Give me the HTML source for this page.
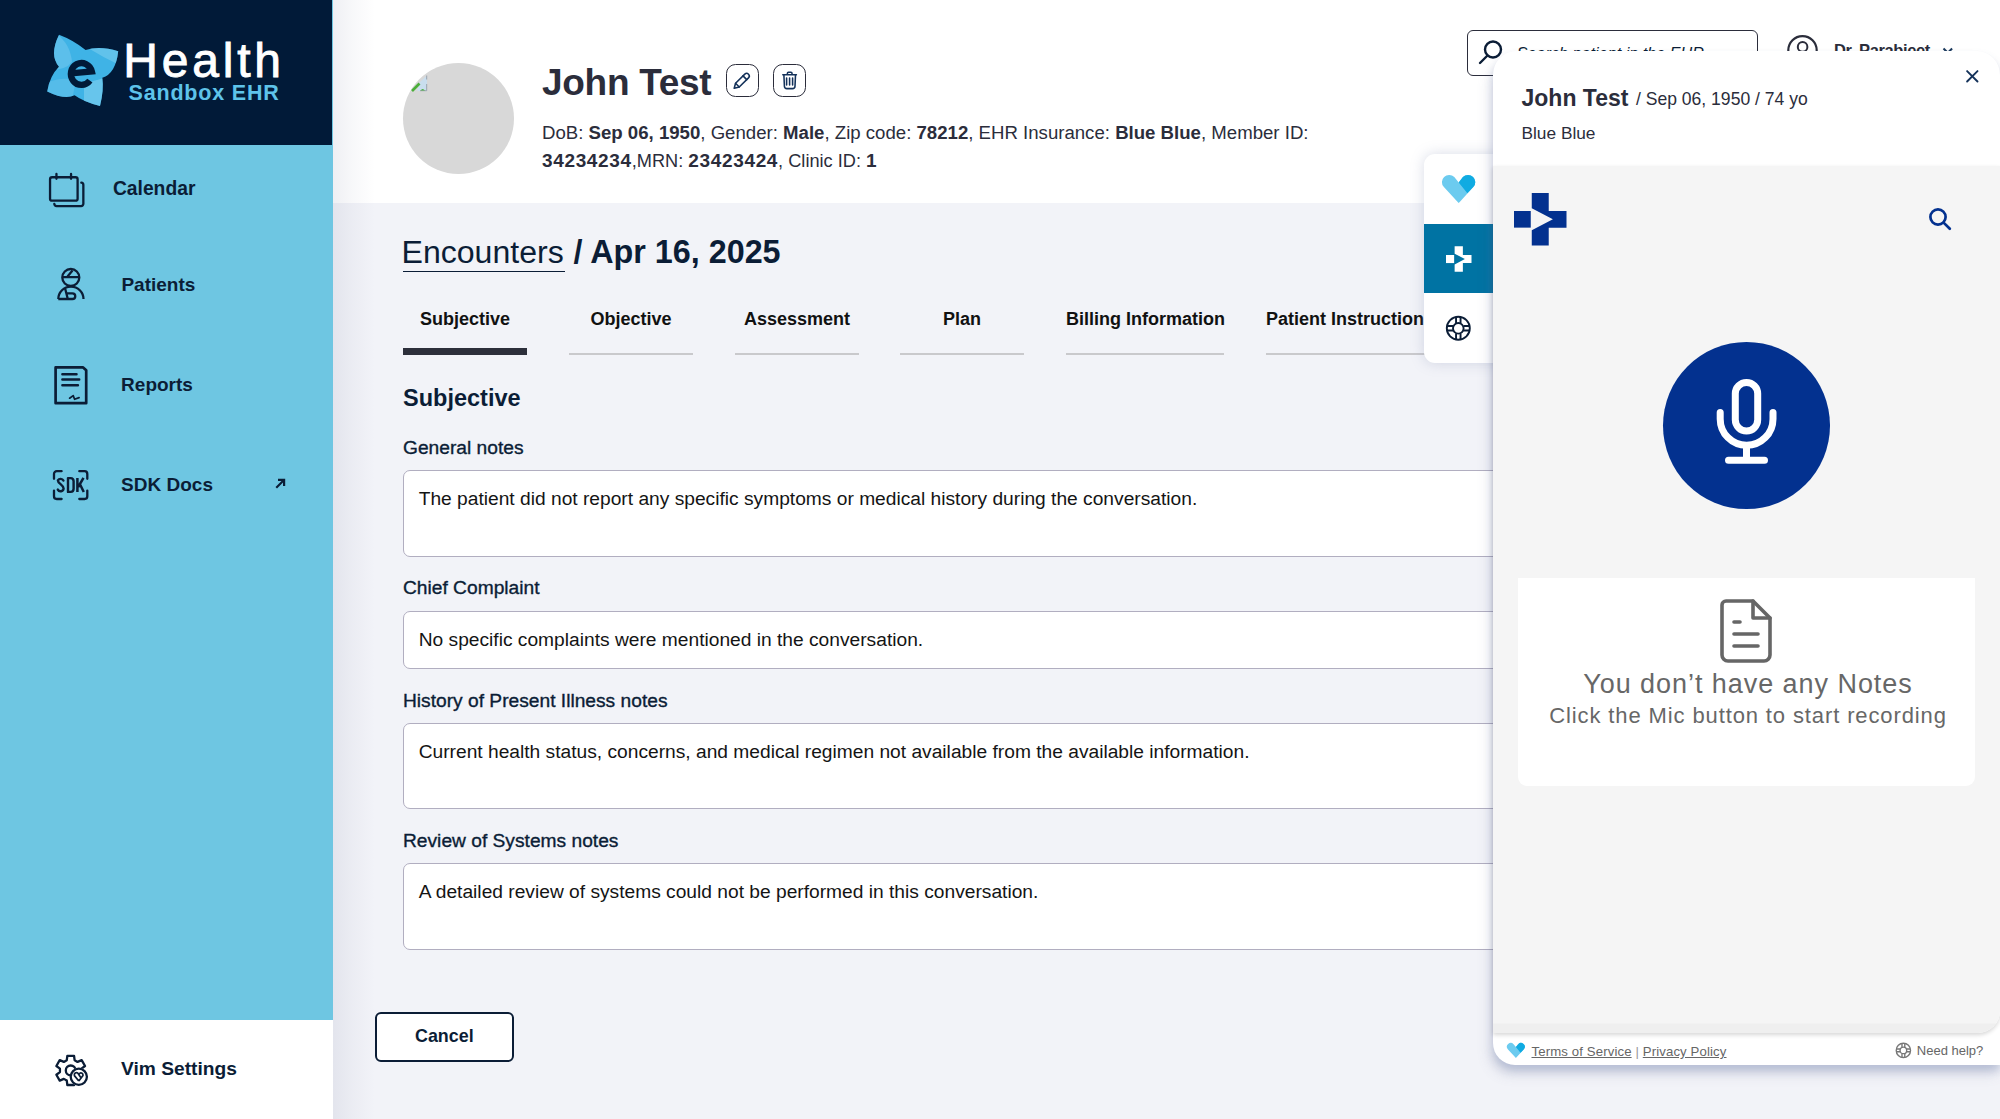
<!DOCTYPE html>
<html><head><meta charset="utf-8"><title>EHR</title><style>
*{box-sizing:border-box;margin:0;padding:0}
html,body{width:2000px;height:1119px;overflow:hidden;font-family:"Liberation Sans",sans-serif;background:#f2f3f8;color:#0b1d36}
.t{position:absolute;white-space:nowrap;line-height:1}
.a{position:absolute}
svg{position:absolute;overflow:visible}
</style></head><body>
<div class="a" style="left:333px;top:0;width:1667px;height:203px;background:#fff"></div>
<div class="a" style="left:333px;top:0;width:42px;height:1119px;background:linear-gradient(90deg,rgba(40,50,100,.075),rgba(40,50,100,.035) 45%,rgba(40,50,100,0))"></div>
<div class="a" style="left:403px;top:63px;width:111px;height:111px;border-radius:50%;background:#d8d8d8;overflow:hidden"><svg style="left:9px;top:12px" width="16" height="16" viewBox="0 0 16 16"><path d="M6.5 8.5L15 0.5V16H5.5Z" fill="#c9deee"/><path d="M14.7 0.5V4.5M14.7 9V15.7H8" fill="none" stroke="#9aa3ad" stroke-width="1"/><path d="M0 16L7.5 8.5" stroke="#4cae3a" stroke-width="2.6"/><path d="M8.5 15.6Q10.5 12.3 13 15.6Z" fill="#4cae3a"/></svg></div>
<div class="t" style="left:542.0px;top:63.7px;font-size:37px;font-weight:700;color:#2b2d3b;letter-spacing:-0.3px;">John Test</div>

<div class="a" style="left:726px;top:64px;width:33px;height:33px;border:1.8px solid #2b2d3b;border-radius:9.5px"></div>
<div class="a" style="left:773px;top:64px;width:33px;height:33px;border:1.8px solid #2b2d3b;border-radius:9.5px"></div>
<svg style="left:720px;top:60px" width="92" height="40" viewBox="720 60 92 40" fill="none" stroke="#14325a" stroke-width="1.55" stroke-linejoin="round" stroke-linecap="round"><path d="M734.2 88.3L735.57 83.29L744.82 74.15A2.6 2.6 0 0 1 748.48 77.85L739.23 86.99Z"/><path d="M735.57 83.29L739.23 86.99M743.04 75.91L746.7 79.6"/><path d="M782.8 74.7H796.4M787.4 74.5V73.2A1 1 0 0 1 788.4 72.2H791A1 1 0 0 1 792 73.2V74.5"/><path d="M783.9 75L784.4 86.2A2.5 2.5 0 0 0 786.9 88.6H792.5A2.5 2.5 0 0 0 795 86.2L795.5 75"/><path d="M786.6 77.9V85M789.6 77.9V85M792.6 77.9V85"/></svg>
<div class="t" style="left:542.0px;top:124.2px;font-size:18.62px;color:#2b2d3b;">DoB: <b>Sep 06, 1950</b>, Gender: <b>Male</b>, Zip code: <b>78212</b>, EHR Insurance: <b>Blue Blue</b>, Member ID:</div>

<div class="t" style="left:542.0px;top:150.5px;font-size:19px;color:#2b2d3b;"><b style="letter-spacing:0.65px">34234234</b><span style="font-size:18.2px">,MRN: </span><b style="letter-spacing:0.65px">23423424</b><span style="font-size:18.2px">, Clinic ID: </span><b>1</b></div>

<div class="a" style="left:0;top:0;width:333px;height:1119px;background:#6ec6e2"></div>
<div class="a" style="left:0;top:0;width:332px;height:145px;background:#011a38"></div>
<div class="a" style="left:0;top:1020px;width:333px;height:99px;background:#fff"></div>
<svg style="left:0;top:0" width="140" height="120" viewBox="0 0 140 120"><defs><clipPath id="fc"><path d="M59 34.8Q73 40 85.6 50Q99.7 45.6 118.2 51.2Q115.8 73.5 102.3 77.8Q104 90 100 105.9Q83.9 102 74.6 95.2Q64.7 100.1 47.2 91.4Q49.7 75.8 59 66.7Q49 55.3 59 34.8Z"/></clipPath></defs><path d="M59 34.8Q73 40 85.6 50Q99.7 45.6 118.2 51.2Q115.8 73.5 102.3 77.8Q104 90 100 105.9Q83.9 102 74.6 95.2Q64.7 100.1 47.2 91.4Q49.7 75.8 59 66.7Q49 55.3 59 34.8Z" fill="#3fb3e6"/><g clip-path="url(#fc)"><path d="M50 30Q70 40 72 62Q66 70 50 70Z" fill="#74c9ee" opacity=".55"/><path d="M88 48Q100 44 122 50L122 66Q104 58 88 48Z" fill="#78ccef" opacity=".6"/><path d="M84 84Q96 80 104 78L104 110 84 104Z" fill="#7ccfef" opacity=".65"/><path d="M44 84Q60 76 76 80L72 100 44 96Z" fill="#70c8ee" opacity=".45"/></g></svg>
<svg style="left:0;top:0" width="140" height="120" viewBox="0 0 140 120"><path d="M71 73.4L91.8 71.4A10.6 10.9 0 1 0 89.9 80.6" fill="none" stroke="#011a38" stroke-width="6.4"/></svg>
<div class="t" style="left:123.3px;top:36.8px;font-size:48px;color:#ffffff;letter-spacing:3.8px;-webkit-text-stroke:0.9px #fff;">Health</div>

<div class="t" style="left:128.6px;top:83.2px;font-size:21.5px;font-weight:700;color:#5ec3ea;letter-spacing:0.8px;">Sandbox EHR</div>

<div class="t" style="left:112.9px;top:179.1px;font-size:19.3px;font-weight:700;color:#0b1d36;">Calendar</div>

<div class="t" style="left:121.4px;top:274.6px;font-size:19px;font-weight:700;color:#0b1d36;">Patients</div>

<div class="t" style="left:121.1px;top:375.1px;font-size:19px;font-weight:700;color:#0b1d36;">Reports</div>

<div class="t" style="left:121.1px;top:474.7px;font-size:19px;font-weight:700;color:#0b1d36;">SDK Docs</div>

<div class="t" style="left:121.0px;top:1058.9px;font-size:19.2px;font-weight:700;color:#0b1d36;">Vim Settings</div>

<svg style="left:0;top:0" width="1" height="1"></svg>
<svg style="left:46px;top:170px" width="42" height="42" viewBox="0 0 42 42" fill="none" stroke="#0b1d36" stroke-width="2.3" stroke-linejoin="round" stroke-linecap="round"><rect x="4.05" y="7.25" width="27.55" height="23.4" rx="2"/><path d="M10.45 4V8.8M25.05 4V8.8"/><path d="M35.3 12.7A2.2 2.2 0 0 1 37.35 14.9V33.8A2.25 2.25 0 0 1 35.1 36.05H10.5A2.2 2.2 0 0 1 8.3 33.85"/></svg>
<svg style="left:50px;top:262px" width="42" height="42" viewBox="0 0 42 42" fill="none" stroke="#0b1d36" stroke-width="2.3" stroke-linejoin="round"><circle cx="20.8" cy="15.5" r="8.5"/><path d="M12.5 15.2H29M17.5 14.5L22.5 8.6"/><path d="M8.3 37A12.6 12.4 0 0 1 33.5 37"/><path d="M8.3 37H22.4A2.85 2.85 0 0 0 22.4 31.3H17.2M15 26L17.8 37"/></svg>
<svg style="left:50px;top:362px" width="42" height="46" viewBox="0 0 42 46" fill="none" stroke="#0b1d36" stroke-width="2.7" stroke-linejoin="round" stroke-linecap="round"><path d="M5.6 5.4H33.1L36.2 8.3V41.2H5.6Z"/><path d="M12.4 12.2H26.5M12.4 17.6H29.2M12.4 23.2H27.9" stroke-width="2.5"/><path d="M19.6 36.2L23.2 33.6L24.6 37.3L29.1 35.6" stroke-width="1.7"/></svg>
<svg style="left:46px;top:462px" width="50" height="50" viewBox="0 0 50 50" fill="none" stroke="#0b1d36" stroke-width="2.3" stroke-linejoin="round" stroke-linecap="round"><path d="M8 16.8V11.9A2.7 2.7 0 0 1 10.7 9.2H15.6M33.3 9.2H38.6A2.7 2.7 0 0 1 41.3 11.9V16.8M8 28.6V34.3A2.7 2.7 0 0 0 10.7 37H15.6M33.3 37H38.6A2.7 2.7 0 0 0 41.3 34.3V28.6"/><path d="M17.4 18.6A3.1 3.1 0 0 0 11.9 18.4C11.9 21.8 17.6 22.6 17.6 26.6A3.1 3.1 0 0 1 11.8 27.6" stroke-width="2.4"/><path d="M22 16.1V29.9H24.6A3.1 3.1 0 0 0 27.6 26.8V19.2A3.1 3.1 0 0 0 24.6 16.1Z" stroke-width="2.4" stroke-linecap="butt"/><path d="M31.4 15.9V30M37.5 15.9L32.2 25M34.1 22.5L37.8 30" stroke-width="2.5" stroke-linecap="butt"/></svg>
<svg style="left:274px;top:477px" width="13" height="13" viewBox="0 0 13 13" fill="#0b1d36"><path d="M3 11.5L1.5 10 7.5 4H4V1.8h7.2V9H9V5.5z"/></svg>
<svg style="left:48px;top:1046px" width="50" height="50" viewBox="0 0 50 50" fill="none" stroke="#0b1d36" stroke-width="2.3" stroke-linejoin="round"><path d="M18.79 14.22 L19.33 9.78 L26.07 9.78 L26.61 14.22 L29.56 15.93 L33.67 14.17 L37.04 20.01 L33.47 22.69 L33.47 26.11 L37.04 28.79 L33.67 34.63 L29.56 32.87 L26.61 34.58 L26.07 39.02 L19.33 39.02 L18.79 34.58 L15.84 32.87 L11.73 34.63 L8.36 28.79 L11.93 26.11 L11.93 22.69 L8.36 20.01 L11.73 14.17 L15.84 15.93Z"/><circle cx="22.7" cy="24.4" r="4.9"/><circle cx="30.8" cy="30.8" r="9.1" fill="#fff" stroke="none"/><circle cx="30.8" cy="30.8" r="8.1" fill="#fff"/><path d="M30.8 35L26.4 29.6A2.2 2.2 0 0 1 29.9 27.2L32.6 31.3M30.8 35L35 29.4A2.1 2.1 0 0 0 31.7 27.4L31 28.6" stroke-width="1.7"/></svg>
<div class="t" style="left:401.5px;top:235.8px;font-size:32.1px;color:#0b1d36;">Encounters</div>

<div class="a" style="left:403px;top:270.5px;width:162px;height:1.6px;background:#0b1d36"></div>
<div class="t" style="left:573.5px;top:235.7px;font-size:32.3px;font-weight:700;color:#0b1d36;">/ Apr 16, 2025</div>

<div class="t" style="left:403px;top:310.4px;width:124px;text-align:center;font-size:18px;font-weight:700;color:#111">Subjective</div>
<div class="a" style="left:403px;top:352.5px;width:124px;height:2.5px;background:#c9c9cc"></div>
<div class="t" style="left:569px;top:310.4px;width:124px;text-align:center;font-size:18px;font-weight:700;color:#111">Objective</div>
<div class="a" style="left:569px;top:352.5px;width:124px;height:2.5px;background:#c9c9cc"></div>
<div class="t" style="left:735px;top:310.4px;width:124px;text-align:center;font-size:18px;font-weight:700;color:#111">Assessment</div>
<div class="a" style="left:735px;top:352.5px;width:124px;height:2.5px;background:#c9c9cc"></div>
<div class="t" style="left:900px;top:310.4px;width:124px;text-align:center;font-size:18px;font-weight:700;color:#111">Plan</div>
<div class="a" style="left:900px;top:352.5px;width:124px;height:2.5px;background:#c9c9cc"></div>
<div class="t" style="left:1066px;top:310.4px;width:158px;text-align:center;font-size:18px;font-weight:700;color:#111">Billing Information</div>
<div class="a" style="left:1066px;top:352.5px;width:158px;height:2.5px;background:#c9c9cc"></div>
<div class="t" style="left:1266px;top:310.4px;width:168px;text-align:center;font-size:18px;font-weight:700;color:#111">Patient Instructions</div>
<div class="a" style="left:1266px;top:352.5px;width:168px;height:2.5px;background:#c9c9cc"></div>
<div class="a" style="left:403px;top:347.5px;width:124px;height:7px;background:#2d2f3b"></div>
<div class="t" style="left:403.0px;top:387.3px;font-size:23.5px;font-weight:700;color:#0b1d36;">Subjective</div>

<div class="t" style="left:403.0px;top:438.0px;font-size:19.2px;color:#0b1d36;-webkit-text-stroke:0.35px #0b1d36;">General notes</div>

<div class="a" style="left:403px;top:470.0px;width:1200px;height:86.6px;background:#fff;border:1.7px solid #b1aec0;border-radius:7px"></div>
<div class="t" style="left:418.7px;top:489.0px;font-size:19.2px;color:#141414;">The patient did not report any specific symptoms or medical history during the conversation.</div>

<div class="t" style="left:403.0px;top:577.8px;font-size:19.2px;color:#0b1d36;-webkit-text-stroke:0.35px #0b1d36;">Chief Complaint</div>

<div class="a" style="left:403px;top:610.7px;width:1200px;height:58.2px;background:#fff;border:1.7px solid #b1aec0;border-radius:7px"></div>
<div class="t" style="left:418.7px;top:629.7px;font-size:19.2px;color:#141414;">No specific complaints were mentioned in the conversation.</div>

<div class="t" style="left:403.0px;top:690.5px;font-size:19.2px;color:#0b1d36;-webkit-text-stroke:0.35px #0b1d36;">History of Present Illness notes</div>

<div class="a" style="left:403px;top:723.1px;width:1200px;height:85.9px;background:#fff;border:1.7px solid #b1aec0;border-radius:7px"></div>
<div class="t" style="left:418.7px;top:742.1px;font-size:19.2px;color:#141414;">Current health status, concerns, and medical regimen not available from the available information.</div>

<div class="t" style="left:403.0px;top:830.7px;font-size:19.2px;color:#0b1d36;-webkit-text-stroke:0.35px #0b1d36;">Review of Systems notes</div>

<div class="a" style="left:403px;top:863.4px;width:1200px;height:86.2px;background:#fff;border:1.7px solid #b1aec0;border-radius:7px"></div>
<div class="t" style="left:418.7px;top:882.4px;font-size:19.2px;color:#141414;">A detailed review of systems could not be performed in this conversation.</div>

<div class="a" style="left:375px;top:1012px;width:139px;height:50px;border:2px solid #0b1d36;border-radius:6px;background:#fff"></div>
<div class="t" style="left:415.0px;top:1027.8px;font-size:17.9px;font-weight:700;color:#0b1d36;">Cancel</div>

<div class="a" style="left:1467px;top:29.5px;width:291px;height:46.5px;border:1.6px solid #2b2d3b;border-radius:6px;background:#fff"></div>
<svg style="left:1476px;top:38px" width="30" height="30" viewBox="0 0 30 30" fill="none" stroke="#0b1d36" stroke-width="2.4" stroke-linecap="round"><circle cx="17" cy="11.5" r="8"/><path d="M11.5 17.5L4 25"/></svg>
<div class="t" style="left:1516.8px;top:44.5px;font-size:16.2px;color:#0b1d36;font-style:italic;">Search patient in the EHR</div>

<svg style="left:1780px;top:28px" width="46" height="46" viewBox="1780 28 46 46" fill="none" stroke="#2b2d3b" stroke-width="2.2"><circle cx="1802.5" cy="50.3" r="14.2"/><circle cx="1802.6" cy="46.9" r="4.8" stroke-width="2"/></svg>
<div class="t" style="left:1834.0px;top:42.4px;font-size:16.5px;font-weight:700;color:#2b2d3b;letter-spacing:-0.38px;">Dr. Parabjeet</div>

<svg style="left:1940px;top:44px" width="16" height="12" viewBox="1940 44 16 12" fill="none" stroke="#1c3a5e" stroke-width="2"><path d="M1943.5 48.5l4.3 4.3 4.3-4.3"/></svg>
<div class="a" style="left:1424px;top:154px;width:90px;height:209px;background:#fff;border-radius:11px 0 0 11px;box-shadow:0 0 14px rgba(120,130,170,.28)"></div>
<div class="a" style="left:1424px;top:224px;width:90px;height:69px;background:#0073a3"></div>
<svg style="left:1441.8px;top:174.9px" width="33.2" height="28" viewBox="0 0 33.2 28"><path d="M16.7 28L15 26.2L1.9 12.07A7.2 7.2 0 0 1 12.3 2.1L16.7 7.4L20.9 2.1A7.2 7.2 0 0 1 31.3 12.07L18.4 26.2Z" fill="#6ccbef"/><path d="M16.7 7.4L20.9 2.1A7.2 7.2 0 0 1 31.3 12.07L25.4 18.3Z" fill="#10abe2"/></svg>
<svg style="left:1445.5px;top:246px" width="25.5" height="26" viewBox="0 0 52 52" fill="#fff"><path d="M17.6 0H34.4V17.8H52V34.3H34.4V52H17.6V37L38.5 26.1L17.6 15.2Z"/><path d="M0 17.8H16.6V34.3H0Z"/></svg>
<svg style="left:1440px;top:310px" width="37" height="37" viewBox="0 0 37 37" fill="none" stroke="#0b1d36" stroke-width="1.9"><circle cx="18.3" cy="18.3" r="11.5"/><circle cx="18.3" cy="18.3" r="5.3"/><path d="M16.05 7v6M20.55 7v6M16.05 23.6v6M20.55 23.6v6M7 16.05h6M7 20.55h6M23.6 16.05h6M23.6 20.55h6"/></svg>
<div class="a" style="left:1493px;top:51px;width:507px;height:1014px;background:#fff;border-radius:24px 24px 0 22px;box-shadow:0 6px 9px rgba(95,115,165,.30),-4px 10px 13px rgba(90,100,140,.14)"></div>
<div class="a" style="left:1493px;top:166px;width:507px;height:867px;background:linear-gradient(180deg,#f5f5f5 0,#f5f5f5 857px,#efefef 858px);border-radius:0 0 22px 0;box-shadow:0 2px 4px rgba(0,0,0,.16)"></div>
<svg style="left:1960px;top:64px" width="25" height="25" viewBox="1960 64 25 25" stroke="#14325a" stroke-width="1.9" stroke-linecap="round"><path d="M1967.1 71.1L1977.5 81.5M1977.5 71.1L1967.1 81.5"/></svg>
<div class="t" style="left:1521.5px;top:86.5px;font-size:23px;font-weight:700;color:#2b2d3b;">John Test</div>

<div class="t" style="left:1636.0px;top:91.1px;font-size:17.56px;color:#2b2d3b;">/ Sep 06, 1950 / 74 yo</div>

<div class="t" style="left:1521.5px;top:125.2px;font-size:17.3px;color:#2b2d3b;">Blue Blue</div>

<svg style="left:1514px;top:193px" width="52.5" height="52.5" viewBox="0 0 52 52" fill="#03318f"><path d="M17.6 0H34.4V17.8H52V34.3H34.4V52H17.6V37L38.5 26.1L17.6 15.2Z"/><path d="M0 17.8H16.6V34.3H0Z"/></svg>
<svg style="left:1927px;top:206px" width="26" height="26" viewBox="0 0 26 26" fill="none" stroke="#03318f" stroke-width="2.7" stroke-linecap="round"><circle cx="11" cy="11" r="7.6"/><path d="M16.6 16.6L22.8 22.8"/></svg>
<div class="a" style="left:1663px;top:342px;width:167px;height:167px;border-radius:50%;background:#03318f"></div>
<svg style="left:1700px;top:370px" width="100" height="100" viewBox="1700 370 100 100" fill="none" stroke="#fff" stroke-width="7" stroke-linecap="round"><rect x="1735.3" y="382.4" width="22.4" height="48.6" rx="11.2"/><path d="M1720.2 412.5V418.9A26.4 26.4 0 0 0 1773 418.9V412.5M1746.5 446V460M1728.5 460.3H1764.5"/></svg>
<div class="a" style="left:1518px;top:578px;width:457px;height:208px;background:#fff;border-radius:0 0 9px 9px"></div>
<svg style="left:1718px;top:597px" width="58" height="68" viewBox="0 0 58 68" fill="none" stroke="#666" stroke-width="3.6" stroke-linecap="round" stroke-linejoin="round"><path d="M8 4h27l17 17v37a6 6 0 0 1-6 6H10a6 6 0 0 1-6-6V8a4 4 0 0 1 4-4z"/><path d="M35 4v17h17M16 25h6M16 37h24M16 49h24"/></svg>
<div class="t" style="left:1583.2px;top:671.1px;font-size:27px;color:#676767;letter-spacing:0.95px;">You don&#8217;t have any Notes</div>

<div class="t" style="left:1549.3px;top:705.4px;font-size:22px;color:#676767;letter-spacing:0.88px;">Click the Mic button to start recording</div>

<svg style="left:1506.9px;top:1042.9px" width="17.6" height="15" viewBox="0 0 33 28"><path d="M16.7 28L15 26.2L1.9 12.07A7.2 7.2 0 0 1 12.3 2.1L16.7 7.4L20.9 2.1A7.2 7.2 0 0 1 31.3 12.07L18.4 26.2Z" fill="#6ccbef"/><path d="M16.7 7.4L20.9 2.1A7.2 7.2 0 0 1 31.3 12.07L25.4 18.3Z" fill="#10abe2"/></svg>
<div class="t" style="left:1531.5px;top:1045.0px;font-size:13.2px;color:#666;letter-spacing:0.12px;"><u>Terms of Service</u> <span style="color:#999">|</span> <u>Privacy Policy</u></div>

<svg style="left:1891.8px;top:1038.9px" width="23" height="23" viewBox="0 0 37 37" fill="none" stroke="#777" stroke-width="2.2"><circle cx="18.3" cy="18.3" r="11.5"/><circle cx="18.3" cy="18.3" r="5.3"/><path d="M16.05 7v6M20.55 7v6M16.05 23.6v6M20.55 23.6v6M7 16.05h6M7 20.55h6M23.6 16.05h6M23.6 20.55h6"/></svg>
<div class="t" style="left:1916.8px;top:1044.4px;font-size:13px;color:#666;">Need help?</div>

</body></html>
